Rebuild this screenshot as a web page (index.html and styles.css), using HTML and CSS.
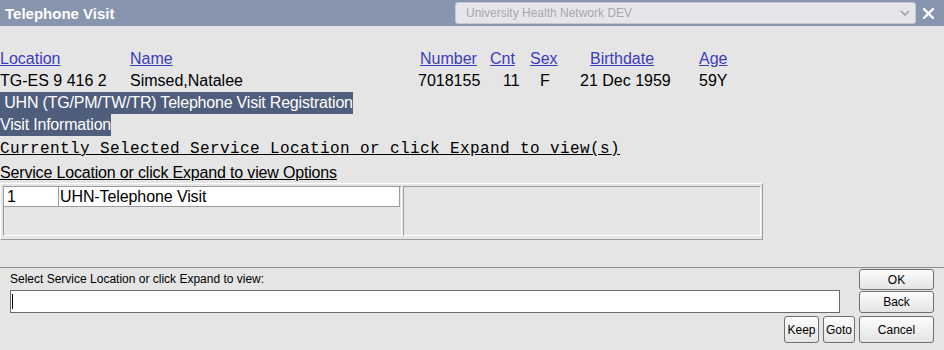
FILE: index.html
```html
<!DOCTYPE html>
<html>
  <head>
    <meta charset="UTF-8">
    <title>Telephone Visit</title>
    <link rel="stylesheet" href="styles.css">
  </head>
  <body>
    <div class="window">
      <header class="titlebar">
        <span class="title">Telephone Visit</span>
        <div class="env-select">
          <span>University Health Network DEV</span>
          <svg class="chevron" width="10" height="6" viewBox="0 0 10 6"><polyline points="1,1 5,5 9,1" fill="none" stroke="#9b9da5" stroke-width="1.6"/></svg>
        </div>
        <button class="close" title="Close">
          <svg width="11" height="11" viewBox="0 0 11 11"><path d="M1 1 L10 10 M10 1 L1 10" stroke="#fff" stroke-width="2.4" stroke-linecap="square"/></svg>
        </button>
      </header>

      <main class="content">
        <div class="patient">
          <a href="#" class="col-loc">Location</a>
          <a href="#" class="col-name">Name</a>
          <a href="#" class="col-num">Number</a>
          <a href="#" class="col-cnt">Cnt</a>
          <a href="#" class="col-sex">Sex</a>
          <a href="#" class="col-dob">Birthdate</a>
          <a href="#" class="col-age">Age</a>

          <span>TG-ES 9 416 2</span>
          <span>Simsed,Natalee</span>
          <span>7018155</span>
          <span class="val-cnt">11</span>
          <span class="val-sex">F</span>
          <span>21 Dec 1959</span>
          <span>59Y</span>
        </div>

        <div class="banner">&nbsp;UHN (TG/PM/TW/TR) Telephone Visit Registration</div>
        <div class="banner">Visit Information</div>

        <div class="mono-heading">Currently Selected Service Location or click Expand to view(s)</div>
        <div class="list-caption">Service Location or click Expand to view Options</div>

        <div class="optbox">
          <div class="optcell optlist">
            <div class="optrow">
              <span class="optnum">1</span>
              <span class="optname">UHN-Telephone Visit</span>
            </div>
          </div>
          <div class="optcell optdetail"></div>
        </div>
      </main>

      <footer class="prompt">
        <div class="prompt-top">
          <div class="entry">
            <label class="entry-label">Select Service Location or click Expand to view:</label>
            <div class="field"><span class="caret"></span></div>
          </div>
          <div class="stack">
            <button class="btn btn-ok">OK</button>
            <button class="btn btn-back">Back</button>
          </div>
        </div>
        <div class="actions">
          <button class="btn btn-keep">Keep</button>
          <button class="btn btn-goto">Goto</button>
          <button class="btn btn-cancel">Cancel</button>
        </div>
      </footer>
    </div>
  </body>
</html>
```

FILE: styles.css
```css
html, body {
  margin: 0;
  padding: 0;
  background: #e5e5e5;
}
body {
  font-family: "Liberation Sans", Arial, sans-serif;
  color: #000;
}
.window {
  display: flex;
  flex-direction: column;
  height: 100vh;
}

/* title bar */
.titlebar {
  display: flex;
  align-items: center;
  height: 26px;
  padding: 0 10px 0 5px;
  background: #8796ae;
}
.title {
  color: #fff;
  font-weight: bold;
  font-size: 15px;
  line-height: 24px;
  padding-top: 2px;
}
.env-select {
  display: flex;
  align-items: center;
  justify-content: space-between;
  box-sizing: border-box;
  width: 461px;
  height: 22px;
  margin-left: auto;
  padding: 0 5px 0 10px;
  background: #e6e6ea;
  border: 1px solid #c5c8cf;
  border-radius: 3px;
  color: #a6a8b0;
  font-size: 12px;
}
.chevron {
  display: block;
}
.close {
  display: flex;
  margin: 0 0 0 7px;
  padding: 0;
  border: none;
  background: none;
}

/* patient header */
.content {
  padding-top: 22px;
}
.patient {
  display: grid;
  grid-template-columns: 130px 288px 72px 40px 50px 119px 1fr;
  font-size: 16px;
  line-height: 22px;
}
.patient a {
  color: #3c3cc0;
}
.col-num { padding-left: 2px; }
.col-dob { padding-left: 10px; }
.val-cnt { padding-left: 13px; }
.val-sex { padding-left: 10px; }

.banner {
  width: fit-content;
  background: #4f5e7c;
  color: #fff;
  font-size: 16px;
  line-height: 22px;
  letter-spacing: -0.2px;
}

.mono-heading {
  font-family: "Liberation Mono", "Courier New", monospace;
  font-size: 16px;
  letter-spacing: 0.4px;
  line-height: 26px;
  text-decoration: underline;
}
.list-caption {
  font-size: 16px;
  line-height: 21px;
  letter-spacing: -0.17px;
  text-decoration: underline;
}

/* option list */
.optbox {
  display: flex;
  gap: 1px;
  box-sizing: border-box;
  width: 763px;
  padding: 2px 1px 3px 2px;
  border: 1px solid;
  border-color: #fff #9c9c9c #9c9c9c #fff;
}
.optcell {
  box-sizing: border-box;
  height: 50px;
  border: 1px solid;
  border-color: #9c9c9c #fff #fff #9c9c9c;
}
.optlist {
  width: 399px;
}
.optdetail {
  width: 358px;
}
.optrow {
  display: flex;
  margin-right: 1px;
  background: #fff;
  border-right: 1px solid #9c9c9c;
  border-bottom: 1px solid #9c9c9c;
  font-size: 16px;
  line-height: 19px;
  letter-spacing: -0.1px;
}
.optnum {
  box-sizing: border-box;
  width: 55px;
  padding-left: 3px;
  border-right: 1px solid #9c9c9c;
}
.optname {
  padding-left: 1px;
}

/* prompt footer */
.prompt {
  margin-top: auto;
  padding: 1px 10px 7px 10px;
  border-top: 1px solid #8c8c8c;
}
.prompt-top {
  display: flex;
}
.entry {
  flex: 1;
}
.entry-label {
  display: block;
  padding-top: 2px;
  margin-bottom: 3px;
  font-size: 12px;
  line-height: 16px;
}
.field {
  box-sizing: border-box;
  height: 23px;
  padding: 3px 0 0 1px;
  background: #fff;
  border: 1px solid #6a6a6a;
}
.caret {
  display: block;
  width: 1px;
  height: 15px;
  background: #000;
}
.stack {
  display: flex;
  flex-direction: column;
  gap: 1px;
  width: 75px;
  margin-left: 19px;
}
.actions {
  display: flex;
  justify-content: flex-end;
  gap: 4px;
  margin-top: 3px;
}
.btn {
  box-sizing: border-box;
  margin: 0;
  padding: 0;
  border: 1px solid #707070;
  border-radius: 3px;
  background: linear-gradient(#fcfcfc, #e4e4e4);
  color: #000;
  font-family: "Liberation Sans", Arial, sans-serif;
  font-size: 12px;
}
.btn-ok { height: 21px; }
.btn-back { height: 22px; }
.btn-keep { width: 35px; height: 27px; }
.btn-goto { width: 32px; height: 27px; }
.btn-cancel { width: 75px; height: 27px; }
```
